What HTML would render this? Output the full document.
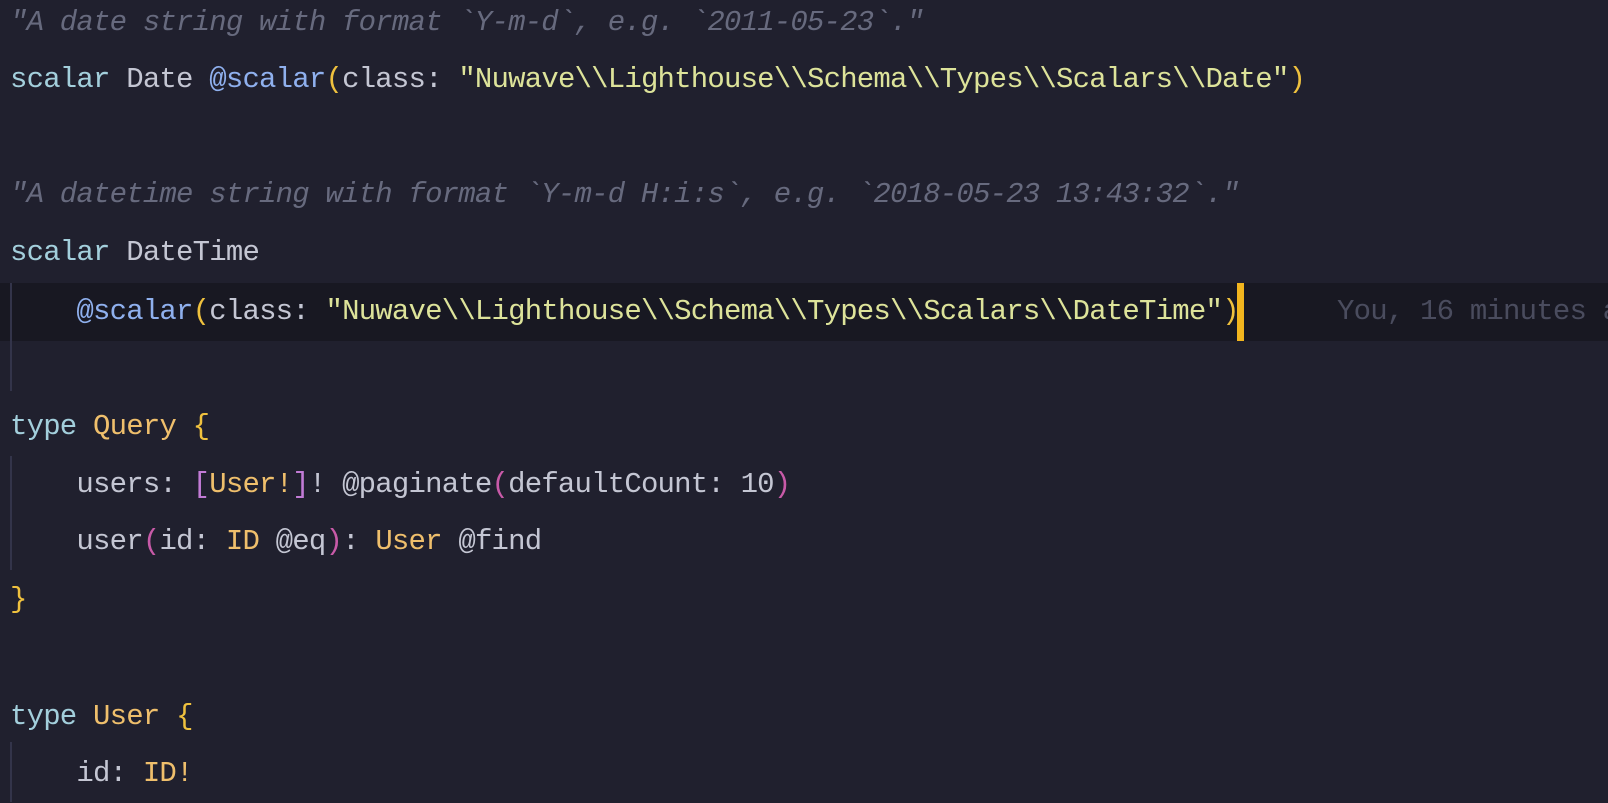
<!DOCTYPE html>
<html><head><meta charset="utf-8"><style>
html,body{margin:0;padding:0}
body{width:1608px;height:802px;background:#20202e;overflow:hidden;position:relative;font-family:"Liberation Mono","DejaVu Sans Mono",monospace;font-size:29px;letter-spacing:-0.8px;color:#c4c6d3}
.l{position:absolute;left:10px;height:58px;line-height:58px;white-space:pre}
.c{color:#676a7e;font-style:italic}
.k{color:#a3cfdc}
.d{color:#8fb0ee}
.y{color:#efc13e}
.s{color:#dde39a}
.t{color:#efbf6c}
.p{color:#c27bd6}
.m{color:#c85aa8}
.hl{position:absolute;left:0;top:283px;width:1608px;height:58px;background:#181822}
.g{position:absolute;left:10px;width:2px;background:#33344a}
.cur{position:absolute;left:1237px;top:283px;width:7px;height:58px;background:#f2b51e}
.blame{position:absolute;left:1337px;top:283px;line-height:58px;color:#4a4c5e;white-space:pre}
</style></head><body>
<div class="hl"></div>
<div class="g" style="top:283px;height:108px"></div>
<div class="g" style="top:456px;height:114px"></div>
<div class="g" style="top:742px;height:60px"></div>
<div class="l c" style="top:-6px">"A date string with format `Y-m-d`, e.g. `2011-05-23`."</div>
<div class="l" style="top:51px"><span class="k">scalar</span> Date <span class="d">@scalar</span><span class="y">(</span>class: <span class="s">"Nuwave\\Lighthouse\\Schema\\Types\\Scalars\\Date"</span><span class="y">)</span></div>
<div class="l c" style="top:166px">"A datetime string with format `Y-m-d H:i:s`, e.g. `2018-05-23 13:43:32`."</div>
<div class="l" style="top:224px"><span class="k">scalar</span> DateTime</div>
<div class="l" style="top:283px">    <span class="d">@scalar</span><span class="y">(</span>class: <span class="s">"Nuwave\\Lighthouse\\Schema\\Types\\Scalars\\DateTime"</span><span class="y">)</span></div>
<div class="cur"></div>
<div class="blame">You, 16 minutes ago</div>
<div class="l" style="top:398px"><span class="k">type</span> <span class="t">Query</span> <span class="y">{</span></div>
<div class="l" style="top:456px">    users: <span class="p">[</span><span class="t">User!</span><span class="p">]</span>! @paginate<span class="m">(</span>defaultCount: 10<span class="m">)</span></div>
<div class="l" style="top:513px">    user<span class="m">(</span>id: <span class="t">ID</span> @eq<span class="m">)</span>: <span class="t">User</span> @find</div>
<div class="l" style="top:571px"><span class="y">}</span></div>
<div class="l" style="top:688px"><span class="k">type</span> <span class="t">User</span> <span class="y">{</span></div>
<div class="l" style="top:745px">    id: <span class="t">ID!</span></div>
</body></html>
